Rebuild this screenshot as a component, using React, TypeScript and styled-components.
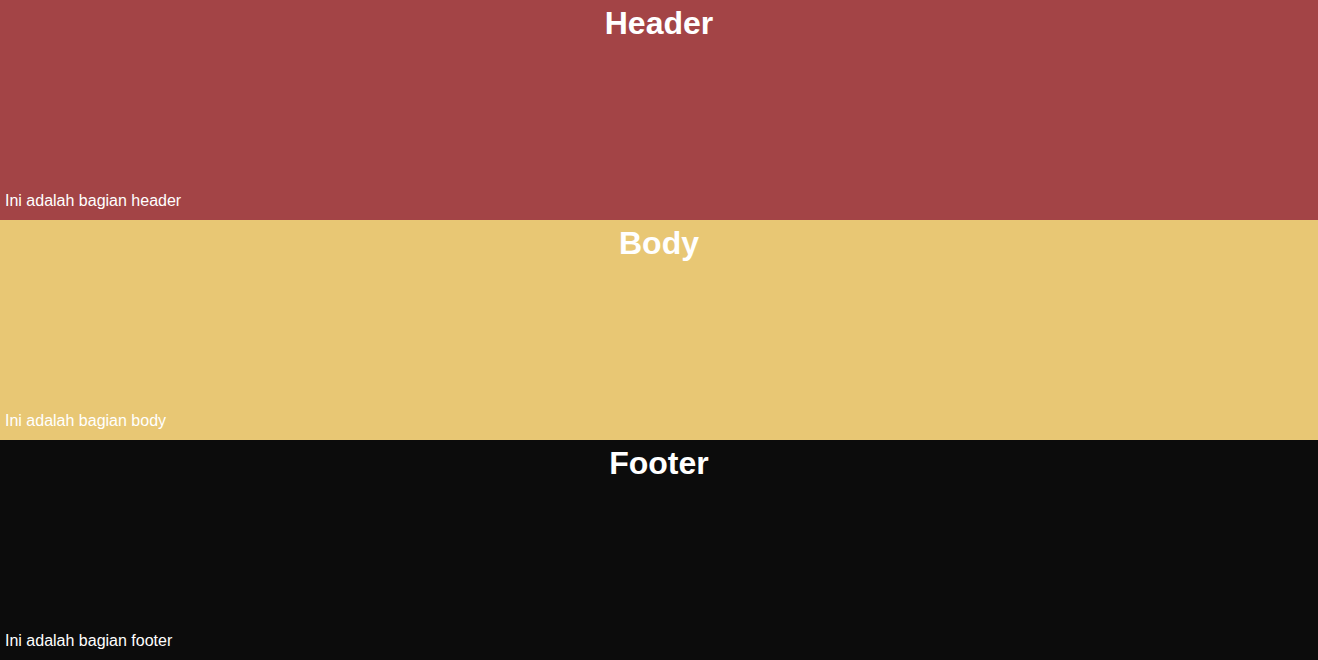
import React from "react";
import styled, { createGlobalStyle } from "styled-components";

const GlobalStyle = createGlobalStyle`
  html, body { margin: 0; padding: 0; }
  body { font-family: "Liberation Sans", Arial, sans-serif; }
`;

const Page = styled.div`
  display: flex;
  flex-direction: column;
  width: 100%;
`;

const Section = styled.section<{ $bg: string }>`
  height: 220px;
  box-sizing: border-box;
  background: ${(p) => p.$bg};
  color: #ffffff;
  display: flex;
  flex-direction: column;
  justify-content: space-between;
  padding: 5px 5px 10px;
`;

const Title = styled.h1`
  margin: 0;
  font-size: 32px;
  font-weight: bold;
  text-align: center;
  line-height: 37px;
`;

const Caption = styled.p`
  margin: 0;
  font-size: 16px;
  line-height: 18px;
`;

const sections = [
  { title: "Header", text: "Ini adalah bagian header", bg: "#a34446" },
  { title: "Body", text: "Ini adalah bagian body", bg: "#e8c774" },
  { title: "Footer", text: "Ini adalah bagian footer", bg: "#0c0c0c" },
];

export default function App() {
  return (
    <>
      <GlobalStyle />
      <Page>
        {sections.map((s) => (
          <Section key={s.title} $bg={s.bg}>
            <Title>{s.title}</Title>
            <Caption>{s.text}</Caption>
          </Section>
        ))}
      </Page>
    </>
  );
}
